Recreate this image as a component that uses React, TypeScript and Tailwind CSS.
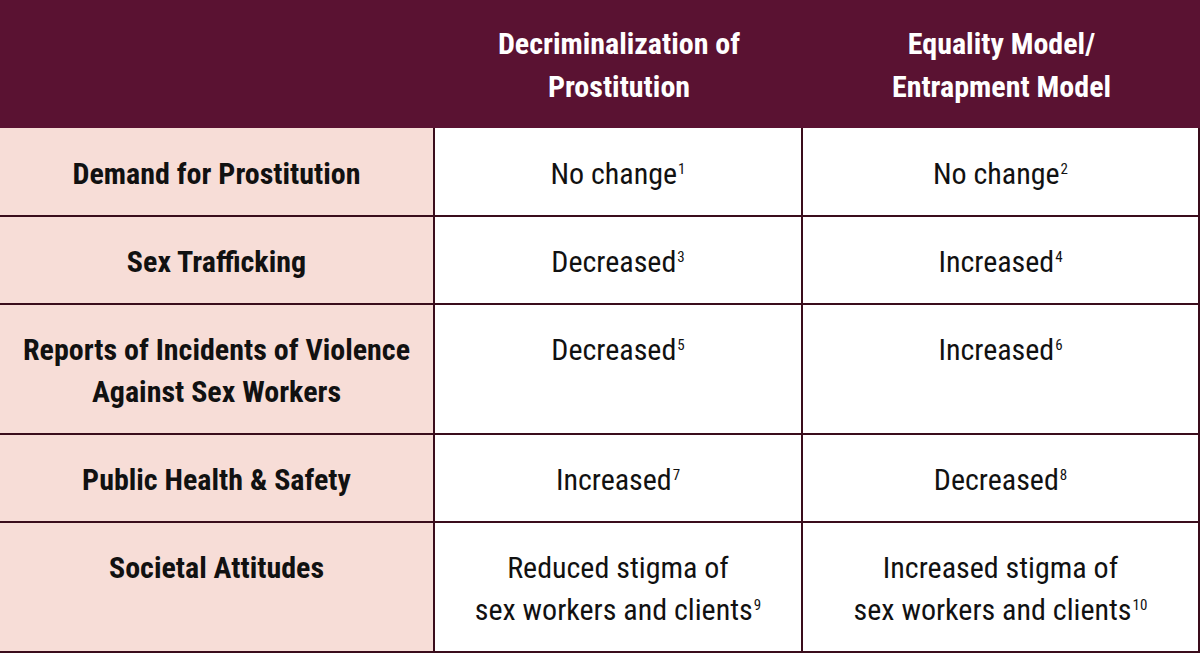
import React from "react";

const rows: { label: string[]; a: [string[], string]; b: [string[], string] }[] = [
  { label: ["Demand for Prostitution"], a: [["No change"], "1"], b: [["No change"], "2"] },
  { label: ["Sex Trafficking"], a: [["Decreased"], "3"], b: [["Increased"], "4"] },
  {
    label: ["Reports of Incidents of Violence", "Against Sex Workers"],
    a: [["Decreased"], "5"],
    b: [["Increased"], "6"],
  },
  { label: ["Public Health & Safety"], a: [["Increased"], "7"], b: [["Decreased"], "8"] },
  {
    label: ["Societal Attitudes"],
    a: [["Reduced stigma of", "sex workers and clients"], "9"],
    b: [["Increased stigma of", "sex workers and clients"], "10"],
  },
];

function Val({ v }: { v: [string[], string] }) {
  const [lines, sup] = v;
  return (
    <>
      {lines.map((l, i) => (
        <div key={i}>
          {l}
          {i === lines.length - 1 && (
            <sup className="text-[15px] leading-none relative -top-[10px] ml-[1px]">{sup}</sup>
          )}
        </div>
      ))}
    </>
  );
}

export default function App() {
  return (
    <div
      className="w-[1200px] h-[655px] bg-white text-[#111] text-[30px] leading-[42px] font-stretch-condensed overflow-hidden"
      style={{ fontFamily: "'Roboto Condensed', Roboto, 'Liberation Sans', sans-serif" }}
    >
      <div className="grid grid-cols-[435px_368px_397px] h-[128px] bg-[#5a1232] text-white font-bold leading-[43px] text-center">
        <div />
        <div className="flex flex-col justify-center pt-[1px]">
          <div>Decriminalization of</div>
          <div>Prostitution</div>
        </div>
        <div className="flex flex-col justify-center pt-[1px]">
          <div>Equality Model/</div>
          <div>Entrapment Model</div>
        </div>
      </div>
      {rows.map((r, i) => {
        const pad = i === 0 ? "pt-[25px] pb-[20px]" : "pt-[24px] pb-[20px]";
        return (
          <div
            key={i}
            className="grid grid-cols-[435px_368px_397px] border-b-2 border-[#3a0d1c] text-center"
          >
            <div className={`bg-[#f7ddd7] font-bold border-r-2 border-[#3a0d1c] ${pad}`}>
              {r.label.map((l, j) => (
                <div key={j}>{l}</div>
              ))}
            </div>
            <div className={`border-r-2 border-[#3a0d1c] ${pad}`}>
              <Val v={r.a} />
            </div>
            <div className={`border-r-2 border-[#3a0d1c] ${pad}`}>
              <Val v={r.b} />
            </div>
          </div>
        );
      })}
    </div>
  );
}
